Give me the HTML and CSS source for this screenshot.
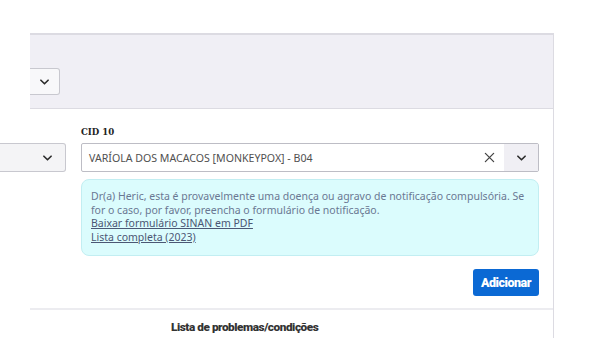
FILE: index.html
```html
<!DOCTYPE html>
<html lang="pt-BR">
<head>
<meta charset="utf-8">
<link rel="stylesheet" href="styles.css">
</head>
<body>
<div class="page">
  <div class="top-panel">
    <div class="mini-select">
      <span class="chev-box"><svg class="chev" viewBox="0 0 10 6" width="10" height="6"><path d="M1 1 L5 5 L9 1" fill="none" stroke="#2b2b2b" stroke-width="1.8" stroke-linecap="round" stroke-linejoin="round"/></svg></span>
    </div>
  </div>
  <div class="content">
    <div class="form-row">
      <div class="left-col">
        <div class="left-select">
          <span class="chev-box"><svg class="chev" viewBox="0 0 10 6" width="10" height="6"><path d="M1 1 L5 5 L9 1" fill="none" stroke="#2b2b2b" stroke-width="1.8" stroke-linecap="round" stroke-linejoin="round"/></svg></span>
        </div>
      </div>
      <div class="cid-col">
        <label class="cid-label">CID 10</label>
        <div class="cid-select">
          <span class="cid-value">VARÍOLA DOS MACACOS [MONKEYPOX] - B04</span>
          <span class="clear"><svg viewBox="0 0 12 12" width="11" height="11"><path d="M1.5 1.5 L10.5 10.5 M10.5 1.5 L1.5 10.5" stroke="#444" stroke-width="1.4" stroke-linecap="round"/></svg></span>
          <span class="chev-box cid-chev"><svg class="chev" viewBox="0 0 10 6" width="10" height="6"><path d="M1 1 L5 5 L9 1" fill="none" stroke="#2b2b2b" stroke-width="1.8" stroke-linecap="round" stroke-linejoin="round"/></svg></span>
        </div>
        <div class="info">
          <p>Dr(a) Heric, esta é provavelmente uma doença ou agravo de notificação compulsória. Se for o caso, por favor, preencha o formulário de notificação.</p>
          <a href="#">Baixar formulário SINAN em PDF</a>
          <a href="#">Lista completa (2023)</a>
        </div>
        <div class="actions">
          <button class="btn-add">Adicionar</button>
        </div>
      </div>
    </div>
    <div class="divider"></div>
    <div class="list-head">Lista de problemas/condições</div>
  </div>
</div>
</body>
</html>
```
FILE: styles.css
```css
html, body {
  margin: 0;
  padding: 0;
  background: #ffffff;
  font-family: "Noto Sans", "Open Sans", sans-serif;
}
.page {
  width: 554px;
  padding-top: 33px;
}
.top-panel {
  margin-left: 30px;
  background: #f0eff5;
  border-top: 2px solid #dcdbe2;
  border-bottom: 1px solid #dcdbe2;
  border-right: 1px solid #dcdbe2;
  padding-top: 33px;
  box-sizing: border-box;
  height: 76px;
}
.mini-select {
  width: 30px;
  height: 27px;
  background: #f8f8fa;
  border: 1px solid #c8c8cf;
  border-left: none;
  border-radius: 0 3px 3px 0;
  box-sizing: border-box;
  display: flex;
}
.chev-box {
  flex: 1;
  display: flex;
  align-items: center;
  justify-content: center;
}
.chev { display: block; width: 9px; height: 6px; }
.content {
  border-right: 1px solid #dcdbe2;
  padding-top: 17px;
}
.form-row {
  display: flex;
  gap: 15px;
  padding-right: 14px;
}
.left-col {
  width: 66px;
  padding-top: 17px;
}
.left-select {
  height: 27px;
  background: #f4f4f6;
  border: 1px solid #c8c8cf;
  border-left: none;
  border-radius: 0 3px 3px 0;
  display: flex;
  padding-left: 30px;
}
.cid-col {
  flex: 1;
  display: flex;
  flex-direction: column;
}
.cid-label {
  font-family: "DejaVu Serif", serif;
  font-weight: bold;
  font-size: 8.6px;
  color: #222;
  line-height: 12px;
  height: 12px;
  margin-bottom: 5px;
}
.cid-select {
  height: 27px;
  border: 1px solid #bdbdc5;
  border-radius: 2px;
  display: flex;
  align-items: stretch;
  background: #fff;
}
.cid-value {
  flex: 1;
  font-size: 10.6px;
  color: #505050;
  display: flex;
  align-items: center;
  padding-left: 7px;
}
.clear {
  display: flex;
  align-items: center;
  padding-right: 9px;
}
.cid-chev {
  flex: 0 0 34px;
  background: #f0eff4;
}
.info {
  margin-top: 7px;
  background: #dbfcfd;
  border: 1px solid #c2eef2;
  border-radius: 8px;
  padding: 10px 8px 11px 9px;
  color: #6a7893;
  font-size: 10.5px;
  line-height: 13.5px;
  display: flex;
  flex-direction: column;
}
.info p { margin: 0; }
.info a {
  color: #4b5774;
  text-decoration: underline;
}
.actions {
  display: flex;
  justify-content: flex-end;
  margin-top: 13px;
}
.btn-add {
  width: 66px;
  height: 27px;
  background: #0b69d4;
  border: none;
  border-radius: 3px;
  color: #fff;
  font-family: "Roboto", sans-serif;
  font-weight: 900;
  font-size: 12.5px;
  letter-spacing: -0.5px;
  padding: 0;
}
.divider {
  margin-top: 12px;
  margin-left: 30px;
  border-top: 2px solid #ececf0;
}
.list-head {
  padding-left: 171px;
  padding-top: 10px;
  font-family: "Roboto", sans-serif;
  font-weight: 900;
  font-size: 11.8px;
  letter-spacing: -0.45px;
  color: #333;
  height: 30px;
}
```
